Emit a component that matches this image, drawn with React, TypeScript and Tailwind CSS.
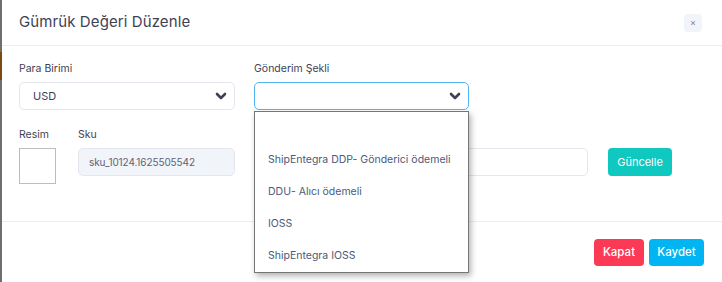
import { useState } from 'react'

const options = ['', 'ShipEntegra DDP- Gönderici ödemeli', 'DDU- Alıcı ödemeli', 'IOSS', 'ShipEntegra IOSS']

function Chevron() {
  return (
    <svg width="12" height="8" viewBox="0 0 12 8" fill="none" stroke="#3f4254"
      strokeWidth="2.6" strokeLinecap="round" strokeLinejoin="round">
      <polyline points="2 2 6 6 10 2" />
    </svg>
  )
}

export default function App() {
  const [open] = useState(true)

  return (
    <div className="w-[722px] h-[282px] flex overflow-hidden font-['Inter',sans-serif]">
      {/* backdrop strip */}
      <div className="w-[2px] flex flex-col bg-[#6e6e6e]">
        <div className="h-[52px]" />
        <div className="h-[28px] bg-[#7a4a10]" />
      </div>

      <div className="flex-1 bg-white flex flex-col">
        {/* Header */}
        <div className="h-[46px] pl-[17px] pr-[20px] flex items-center justify-between border-b border-[#ebedf3]">
          <h3 className="text-[15px] font-normal text-[#3f4254] tracking-[0.1px]">Gümrük Değeri Düzenle</h3>
          <button className="w-[18px] h-[18px] rounded-[4px] bg-[#f1f4f8] flex items-center justify-center text-[9px] leading-none text-[#7e8299]">
            ×
          </button>
        </div>

        {/* Body */}
        <div className="pl-[17px] pt-[16px] pb-[37px] flex flex-col gap-[18px] border-b border-[#ebedf3]">
          <div className="flex gap-[19px]">
            <div className="w-[216px] flex flex-col gap-[6px]">
              <label className="text-[10.5px] leading-[14px] text-[#3f4254]">Para Birimi</label>
              <div className="h-[28px] border border-[#e4e6ef] rounded-[5px] pl-[13px] pr-[7px] flex items-center justify-between">
                <span className="text-[11px] text-[#3f4254]">USD</span>
                <Chevron />
              </div>
            </div>
            <div className="relative w-[215px] flex flex-col gap-[6px]">
              <label className="text-[10.5px] leading-[14px] text-[#3f4254]">Gönderim Şekli</label>
              <div className="h-[28px] border border-[#52b6f2] rounded-[5px] pr-[7px] flex items-center justify-end">
                <Chevron />
              </div>
              {open && (
                <ul className="absolute top-[49px] left-0 w-[215px] bg-white border border-[#767676] shadow-[2px_3px_6px_rgba(0,0,0,0.3)] z-10">
                  {options.map((o, i) => (
                    <li key={i} className="h-[32px] pl-[13px] flex items-center text-[10.5px] text-[#4c5a78]">
                      {o}
                    </li>
                  ))}
                </ul>
              )}
            </div>
          </div>

          <div className="flex gap-[22px]">
            <div className="flex flex-col gap-[6px]">
              <label className="text-[10.5px] leading-[14px] text-[#3f4254]">Resim</label>
              <div className="w-[37px] h-[36px] border border-[#bdbdbd]" />
            </div>
            <div className="w-[157px] flex flex-col gap-[6px]">
              <label className="text-[10.5px] leading-[14px] text-[#3f4254]">Sku</label>
              <div className="h-[28px] bg-[#f1f4f8] border border-[#e4e6ef] rounded-[5px] pl-[10px] flex items-center text-[10px] tracking-[-0.1px] text-[#5e6278]">
                sku_10124.1625505542
              </div>
            </div>
            <div className="flex items-end gap-[20px] ml-[-2px] pb-[8px]">
              <div className="w-[333px] h-[28px] border border-[#e4e6ef] rounded-[5px]" />
              <button className="w-[64px] h-[28px] rounded-[4px] bg-[#0fc8bf] text-white text-[11px]">Güncelle</button>
            </div>
          </div>
        </div>

        {/* Footer */}
        <div className="flex-1 flex justify-end items-start pt-[17px] pr-[18px] gap-[5px]">
          <button className="w-[50px] h-[27px] rounded-[4px] bg-[#fd3a55] text-white text-[11.5px] font-medium">Kapat</button>
          <button className="w-[55px] h-[27px] rounded-[4px] bg-[#00b5f1] text-white text-[11.5px] font-medium">Kaydet</button>
        </div>
      </div>
    </div>
  )
}
